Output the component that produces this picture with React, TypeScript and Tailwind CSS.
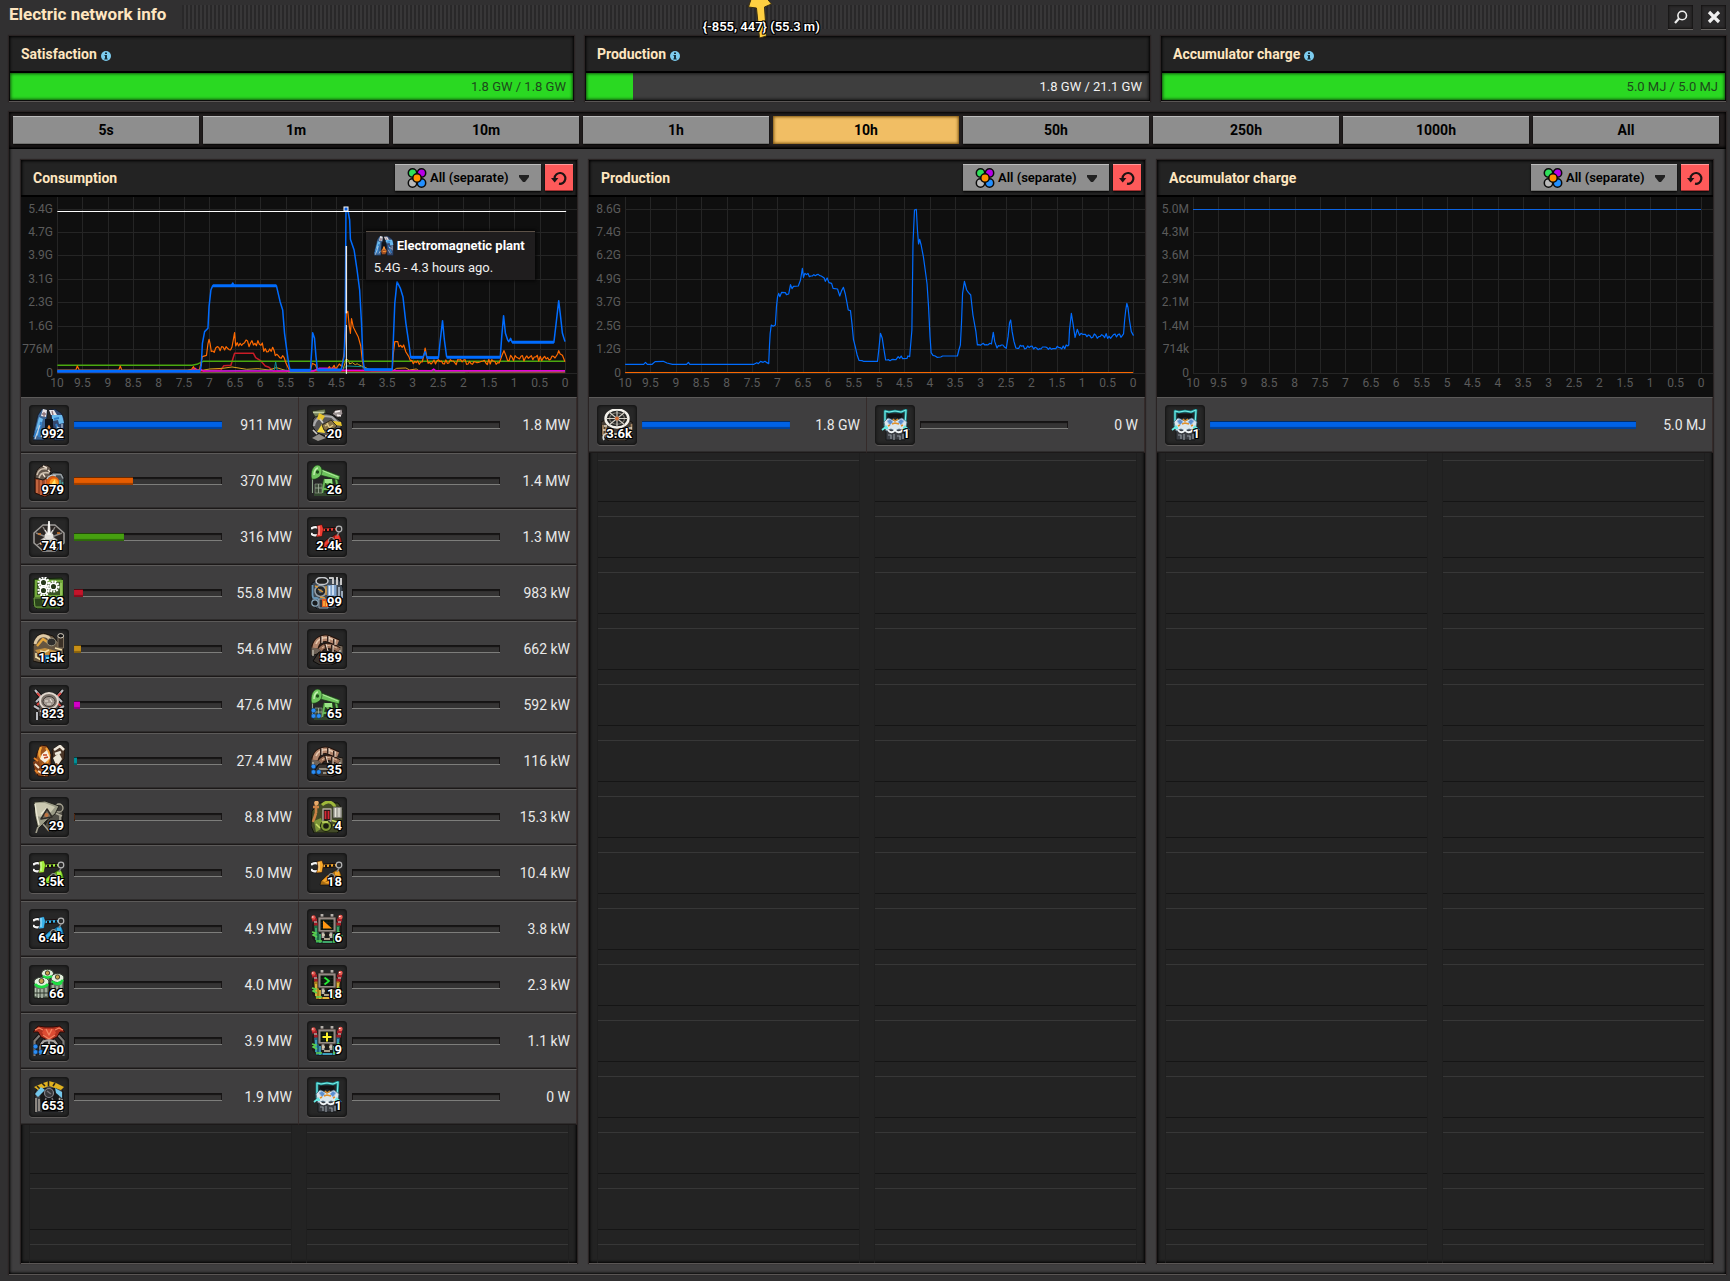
import React from "react";

/* ---------- shared styles ---------- */

const INSET =
  "shadow-[inset_0_0_3px_1px_#000,0_1px_0_#5a5655,0_0_1px_1px_#2a2424]";
const OUTLINE =
  "[text-shadow:1px_0_0_#000,-1px_0_0_#000,0_1px_0_#000,0_-1px_0_#000,1px_1px_0_#000,-1px_1px_0_#000,1px_-1px_0_#000,-1px_-1px_0_#000]";

/* ---------- item sprites, 32 x 32 ---------- */

type Shape = { d: string; f?: string; s?: string; w?: number };
function P({ d, f = "none", s = "none", w = 1 }: Shape) {
  return <path d={d} fill={f} stroke={s} strokeWidth={w} strokeLinejoin="round" />;
}

function Inserter({ c, dark }: { c: string; dark: string }) {
  return (
    <g>
      <P d="M10 24 16 18 19 17 25 13 28 13 30 17 32 25 25 24 19 28 9 28Z" f={dark} s="#0c0c0c" w={0.6} />
      <P d="M11 24 17 19 19 21 14 25ZM24 15l4-1 1 5-5-1ZM22 19l8 2 1 3-8-1ZM13 26l5-2 2 3Z" f={c} />
      <circle cx="20.500" cy="19.500" r="3" fill="#2d2d2d" stroke="#a9a9a9" strokeWidth="1" />
      <P d="M11 9 27 8" s="#1a0d0d" w={4.6} />
      <P d="M11 9 27 8" s={c} w={2.6} />
      <P d="M14 9h2M18 8.700h2M22 8.500h2" s="#101010" w={2.4} />
      <circle cx="28" cy="8" r="2.800" fill="#2b2b2b" stroke="#b5b5b5" strokeWidth="1.200" />
      <P d="M28 11 26 15" s="#888" w={1.6} />
      <P d="M7 6.500C4 5.500 1 6.500 0 8M7 14c-3 1-6 0-7-2" s="#111" w={3.6} />
      <P d="M7 6.500C4 5.500 1 6.500 0 8M7 14c-3 1-6 0-7-2" s="#f4f4f4" w={2.4} />
      <P d="M6 4.500 11 3.500 12.500 8 11 15.500 5.500 16 7 10Z" f={c} s="#250b0b" w={0.6} />
      <P d="M8 5v9" s="#ffffffaa" w={1} />
    </g>
  );
}

function Pumpjack() {
  return (
    <g>
      <P d="M1.500 12V28" s="#8da58a" w={1.100} />
      <P d="M14 14 11 30M20 14 23 30M12 24h14M15 17l9 9M25 14l3 15" s="#24501f" w={3.6} />
      <P d="M14 14 11 29M20 14 23 30M12 24h14M15 17l9 9M25 14l3 15" s="#69b858" w={1.8} />
      <P d="M3 28h27v3H3Z" f="#33482f" />
      <P d="M8 3 29 11 28 15 9 10Z" f="#6cc25c" s="#173c14" w={0.7} />
      <P d="M10 5 27 12" s="#b1e99c" w={1} />
      <P d="M0.500 14C-1 7 2 0 7 0 11 1 12 6 10 10 8 13 4 15 .5 14Z" f="#6fc45e" s="#173c14" w={0.7} />
      <P d="M3 10C3 6 5 3 7 3" s="#c3f0af" w={1.5} />
      <circle cx="6.500" cy="7" r="1.700" fill="#1e4a1b" />
      <P d="M14 14h7v4h-7Z" f="#9be487" />
      <P d="M4 19h7v9H4Z" f="#3b4a37" s="#8a9a85" w={0.7} />
      <P d="M4 23h7M7.500 19v9" s="#a5b3a0" w={0.8} />
    </g>
  );
}

function OffshorePump() {
  return (
    <g>
      <P d="M0 13 8 11 12 19 0 23Z" f="#6d6156" s="#171310" />
      <P d="M22 11 32 13V23L21 20Z" f="#776a5c" s="#171310" />
      <P d="M2 28 8 19H24L30 28 20 32H9Z" f="#3a342f" s="#0d0b0a" />
      <P d="M4 15C5 7 12 4 18 6L27 10" s="#22130c" w={7.5} />
      <P d="M4 15C5 7 12 4 18 6L27 10" s="#b0836a" w={5.5} />
      <P d="M5 11C7 6 12 4 18 5L25 8" s="#e8c9ae" w={1.5} />
      <P d="M9 17C13 11 20 12 28 17" s="#22130c" w={6} />
      <P d="M9 17C13 11 20 12 28 17" s="#996e56" w={4.2} />
      <P d="M11 15C15 11 20 12 26 15" s="#dab699" w={1.1} />
      <P d="M10 3v7M17 3v6M23 6v6M14 11l2 7M21 12v7" s="#33211a" w={2} />
      <P d="M11 3v7M18 3v6M24 6v6M15 11l2 7M22 12v7" s="#ecdccb" w={1} />
      <P d="M2 17v6M29 17v5M8 24h12M12 28h9" s="#b3ada0" w={1.5} />
    </g>
  );
}

function Combinator({ base, light, sign }: { base: string; light: string; sign: React.ReactNode }) {
  return (
    <g>
      <P d="M1 11 7 5H25L31 11V25L26 31H6L1 25Z" f="#1c1a18" />
      <P d="M3 13 8 8V28H24V8L29 13 27 30H5Z" f={base} />
      <P d="M5 15v12M9 21v9M23 21v9M27 14v13M12 29h9" s={light} w={1.8} />
      <P d="M1 19l4 1-3 2 4 2M28 18l-2 3 5 2-4 1M5 28l6 0M22 28l5 0" s="#5ad04e" w={1.7} />
      <P d="M1 7h5M3 11h5M26 7h5M25 11h5" s="#a31c26" w={3} />
      <P d="M3 9h3M27 9h3" s="#e9e4de" w={1.200} />
      <circle cx="2.500" cy="4.500" r="2.200" fill="#e04a43" />
      <circle cx="29.500" cy="4" r="2.200" fill="#ea5a51" />
      <P d="M1 4h1.500M28 3.500h1.500" s="#fff" w={1.2} />
      <P d="M11 1v4M21 1v4M12 19v6M20 19v6" s="#b5b0aa" w={2.8} />
      <P d="M7 4H25V19H7Z" f="#948a84" s="#2b2422" w={0.8} />
      <P d="M9.500 6.500H22.500V17H9.500Z" f="#0b140d" />
      <P d="M10 9.500h12M10 12h12M10 14.500h12M13 7v10M16 7v10M19 7v10" s="#2a332b" w={0.4} />
      {sign}
      <P d="M11 22h3M18 22h3M13 26h6" s="#dccdb0" w={1.5} />
    </g>
  );
}

function Accumulator() {
  return (
    <g>
      <P d="M6 2 10 3 16 2 22 3 27 1 26 17H6Z" f="#20262a" s="#1f8f92" w={2.6} />
      <P d="M6 2 10 3 16 2 22 3 27 1 26 17H6Z" s="#7df5ee" w={1} />
      <P d="M9 5h14l1 6-8-3-8 3Z" f="#121214" />
      <P d="M7 19H26V31H7Z" f="#3b3e44" s="#16181a" />
      <P d="M5 13 9 9 16 12 23 9 28 13 26 22 20 20 16 22 12 20 7 22Z" f="#dbe6ec" s="#4b6a80" w={0.8} />
      <P d="M8 12 11 10 14 13 11 16Z M19 13 22 10 25 12 22 16Z" f="#5c8fd0" s="#9dbce0" w={0.8} />
      <P d="M14 10l2 2 3-2M13 15l3-1 4 1M9 17l2-1M22 17l2-1" s="#e0902a" w={1.5} />
      <P d="M3 21 8 17M25 17 30 21M5 19h4M24 19h4" s="#67e9e3" w={1.8} />
      <P d="M9 21c2 3 5 3 7 0 2 3 5 3 8 0" s="#f4f8fa" w={1.8} />
      <P d="M9 26h3v4M15 25v6M18 27h3v4M24 25v5" s="#8f969d" w={1.2} />
    </g>
  );
}

const SPRITES: Record<string, React.ReactNode> = {
  plant: (
    <g>
      <P d="M5 6 9 0 14 1 14 8 12 20 11 31H0L1 22Z" f="#3c6391" s="#0c1626" w={0.7} />
      <P d="M18 8 16 1 22 0 28 4 31 9 31 31H21L20 18Z" f="#34486f" s="#0c1626" w={0.7} />
      <P d="M6 8 2 24 5 27 10 10ZM19 6h10l2 8-5 1-1-4-6 1Z" f="#69b9ee" />
      <P d="M8 7 10 0 14 1 13 8ZM16 1h5l3 5h-6Z" f="#e9e4e7" />
      <P d="M11 3v5M19 2l1 4M9 5l4 0" s="#8b7178" w={1.3} />
      <P d="M12 10h8v9l-2 3h-6Z" f="#10141c" />
      <P d="M1 28 5 20M8 13 6 28M23 15l5 12M21 10l5-1" s="#2f7cc7" w={2} />
      <P d="M2 30 7 16M24 18l4 2M29 15v8M8 28l2-4M23 22l3 6" s="#c7d3e2" w={1.1} />
      <P d="M11 24 14 20 16 16 18 20 21 24 18 29H13Z" f="#9a4c22" />
      <P d="M14 23 16 17 18 23M14 25h5" s="#ff9838" w={1.6} />
    </g>
  ),
  foundry: (
    <g>
      <P d="M2 12 12 11 17 16V29L12 32 2 28Z" f="#9a4628" s="#210e08" />
      <P d="M4 15v13M8 14v16M12.500 15v15" s="#cf7047" w={1.5} />
      <P d="M2 13C2 5 7 0 14 0l4 3-1 8-7 4Z" f="#63564c" s="#191411" />
      <P d="M4 10C5 5 9 3 14 4M6 13C7 8 11 7 16 8" s="#cdbfae" w={1.6} />
      <P d="M10 1l4 2M15 5l2 2M10 9l2 3" s="#eee0cf" w={1.4} />
      <P d="M15 12 20 7 28 8 31 13 31 23 24 28 17 25Z" f="#464c50" s="#101214" />
      <P d="M20 9.500h8l2 4" s="#98a0a4" w={1.6} />
      <circle cx="20" cy="17.500" r="6.500" fill="#d85a10" />
      <circle cx="21" cy="18" r="4.500" fill="#ff9a1d" />
      <P d="M17 21l5-7 1 6" f="#ffe068" />
      <P d="M14 14c1-3 5-5 9-3" s="#c2c8ca" w={1.3} />
      <P d="M27 15v4M29.500 17v3" s="#3f9e97" w={1.5} />
    </g>
  ),
  roboport: (
    <g>
      <P d="M10 4H22L31 12V22L22 30H10L1 22V12Z" f="#2a2624" s="#a09d9a" w={1.5} />
      <P d="M16 17 3 12M16 17 29 12M16 17 4 24M16 17 28 24M16 17 10 28M16 17 22 28M16 17 10 6M16 17 22 6" s="#8a8682" w={1.4} />
      <P d="M5 13h3M24 12h3M7 23h2M13 25h2M21 26h2" s="#d07a2c" w={1.7} />
      <P d="M7 19 14 14H18L25 19 20 22H12Z" f="#bcbab6" s="#33302d" w={0.5} />
      <ellipse cx="16" cy="15" rx="4.500" ry="3.500" fill="#e4e2dd" />
      <P d="M15.200 0h1.600l1 14h-3.600Z" f="#f7f6f2" />
      <P d="M12 18 7 23M20 18l5 5M14 12l-2-3M18 12l2-3" s="#e8e5df" w={1.2} />
    </g>
  ),
  assembler: (
    <g>
      <P d="M1 2 29 1 31 21 27 32H4L0 28Z" f="#3b5f22" s="#11210a" />
      <P d="M2 3H30V18L28 20H2Z" f="#71a83a" />
      <P d="M4 5H27V18H4Z" f="#3a5424" />
      <P d="M1 21H10V30H2ZM13 22h15v3h-15" f="#2b461b" s="#7aac4d" w={0.9} />
      <P d="M28 6v12M29 22v6" s="#a4cf6a" w={1.3} />
      <g fill="none" stroke="#fff" strokeWidth="2.200" strokeDasharray="1.900 1.100">
        <circle cx="10.500" cy="5.500" r="5" />
        <circle cx="20.500" cy="9.500" r="5" />
        <circle cx="10.500" cy="13.500" r="5" />
      </g>
      <g fill="#26391a" stroke="#fff" strokeWidth="1.500">
        <circle cx="10.500" cy="5.500" r="3.300" />
        <circle cx="20.500" cy="9.500" r="3.300" />
        <circle cx="10.500" cy="13.500" r="3.300" />
      </g>
    </g>
  ),
  drill: (
    <g>
      <P d="M0 13 4 3 10 0 20 3 24 8 30 13 31 25 25 30H8L0 28Z" f="#655541" s="#17120c" />
      <P d="M2 11C4 3 10 1 15 4L20 10" s="#dfcaa6" w={3} />
      <P d="M4 13 10 6 17 11" s="#e3a63e" w={2.4} />
      <ellipse cx="18.500" cy="9" rx="4.500" ry="3.800" fill="#2f2e2d" stroke="#9b9580" />
      <P d="M25 3h5.500v12h-5.500Z" f="#3b3127" s="#8f806a" w={0.8} />
      <ellipse cx="27.700" cy="2.800" rx="2.900" ry="2.200" fill="#121212" stroke="#dcd4c6" />
      <P d="M2 17 12 15 23 18 20 24 7 23Z" f="#c08e3e" />
      <P d="M7 18l5 1 4-2M22 15l7 2M3 24l7 4M3 20v5" s="#f3dfaa" w={1.6} />
      <P d="M11 22h11v8h-11Z" f="#1a6ea8" />
      <P d="M13 25h4M18 27h3" s="#5fd0ff" w={1.8} />
    </g>
  ),
  silo: (
    <g>
      <P d="M4 11 9 6H23L28 11 27 27 16 32 5 27Z" f="#585250" s="#171412" />
      <P d="M2 1 8 8 3 13M30 1 24 8 29 13M1 17 6 20M31 17 26 20M4 31v-8M28 31v-8" s="#12100f" w={4.4} />
      <P d="M2 1 8 8 3 13M30 1 24 8 29 13M1 17 6 20M31 17 26 20M4 31v-8M28 31v-8" s="#b9bbc0" w={2.2} />
      <P d="M4 4l3 3M28 4l-3 3M24 14l4 3M4 16l2-2" s="#d8423c" w={1.8} />
      <ellipse cx="16" cy="12" rx="9" ry="8" fill="#7d736b" stroke="#e0d7cd" strokeWidth="2" />
      <ellipse cx="16" cy="12.500" rx="6" ry="5" fill="#a1978f" stroke="#403a36" />
      <P d="M12 12h3M17 10l2 3M14 15h4" s="#ece5dc" w={1.2} />
      <P d="M7 22 16 25 25 22M12 26v4M20 26v4" s="#c4bcb4" w={1.5} />
    </g>
  ),
  bio: (
    <g>
      <P d="M4 8 8 0 14 1 18 9 18 20 15 32 5 31 1 22Z" f="#9c541c" s="#26100a" />
      <P d="M8 2C5 8 6 13 10 14M13 3c4 4 4 10 1 15" s="#f4a338" w={2.4} />
      <P d="M9 9 14 5 17 13 12 18 7 14Z" f="#f8efdf" />
      <P d="M10 10h4M11 13l4-1" s="#c24420" w={1.6} />
      <P d="M19 5 26 0 32 3 31 14 25 20 20 14Z" f="#4a3527" s="#20140d" />
      <P d="M21 5 27 1 31 5M22 9l6-2" s="#efe8db" w={2.6} />
      <P d="M20 13 26 8 29 14 24 22Z" f="#eee6d6" />
      <P d="M0 17 5 14 8 23 3 30ZM17 21l7-3 3 6-5 7-5-1Z" f="#7f3e1a" />
      <P d="M2 19 6 23M5 26l7 4M14 23l4 5M22 21l4 4" s="#f8e8cf" w={1.9} />
      <P d="M1 13l4 3M9 19l5 3M2 25l3 3" s="#e28028" w={1.9} />
    </g>
  ),
  radar: (
    <g>
      <P d="M14 20 21 8 30 11 29 27 21 31 11 26Z" f="#504e47" s="#141412" />
      <P d="M22 12 29 15M17 24l9 3M27 15v11M19 20l8 3" s="#b0ac9a" w={1.5} />
      <circle cx="26" cy="7" r="4" fill="#3d3c37" stroke="#aaa795" strokeWidth="1.300" />
      <P d="M1 1 12 0 26 5 22 13 13 20 5 28 2 15Z" f="#9b9b87" s="#22221c" />
      <P d="M2 2 12 2 22 6 18 11 9 16 3 15Z" f="#cac8b0" />
      <P d="M2 3 4 15 6 24M8 13l6-6" s="#ebe8d3" w={1.4} />
      <P d="M8 18 14 8 19 16Z" s="#302c27" w={1.5} f="#77705f" />
      <circle cx="13.500" cy="14" r="2" fill="#c07340" />
      <P d="M5 26 3 32M10 23l6 7" s="#a19e8c" w={1.6} />
    </g>
  ),
  centrifuge: (
    <g>
      <P d="M9 4V15H20V4ZM1 13V29H16V13ZM17 9V26H31V9Z" f="#6b7668" s="#141813" />
      <P d="M2.500 19v8M5.500 20v9M9 20v9M13 19v8M20 16v8M24 17v8M28 15v8" s="#b8c4b3" w={1.4} />
      <P d="M1 24h15M17 21h14" s="#2a3328" w={1} />
      <ellipse cx="14.500" cy="4.500" rx="6" ry="4.200" fill="#e2efdc" stroke="#30372e" />
      <ellipse cx="24.500" cy="9" rx="6.500" ry="4.500" fill="#e2efdc" stroke="#30372e" />
      <ellipse cx="8.500" cy="13" rx="7.500" ry="4.800" fill="#e2efdc" stroke="#30372e" />
      <P d="M2 15c3 4 10 4 13 0M19 12c3 4 8 3 11-1M10 7c3 2 6 2 9 0" s="#1ede43" w={2.6} />
      <P d="M21 14c3 2 5 2 8 0" s="#1ede43" w={2} />
      <circle cx="14.500" cy="4" r="2.200" fill="#c7a04a" stroke="#24261f" strokeWidth=".8" />
      <circle cx="24.500" cy="8" r="2.200" fill="#c7a04a" stroke="#24261f" strokeWidth=".8" />
      <circle cx="8.500" cy="12" r="2.500" fill="#c7a04a" stroke="#24261f" strokeWidth=".8" />
    </g>
  ),
  crab: (
    <g>
      <P d="M7 10 1.500 16V31M25 10l5.500 6V31M11 15 7 22v8M21 15l4 7v8" s="#161414" w={4.4} />
      <P d="M7 10 1.500 16V31M25 10l5.500 6V31M11 15 7 22v8M21 15l4 7v8" s="#7d7a77" w={2.2} />
      <P d="M0 7 5 1 12 2H20L27 1 32 7 27 7 24 12 16 16 8 12 5 7Z" f="#b03220" s="#2e0a06" />
      <P d="M11 4h10l2 4-7 6-7-6Z" f="#dd4c33" />
      <P d="M2 5 6 3 10 5M22 5l4-2 4 2M13 4l3 6 3-6M10 10l6 4 6-4" s="#f58461" w={1.3} />
      <P d="M8 19c4-5 12-5 16 0M12 22l4-3 4 3M16 16v9" s="#aaa6a3" w={1.8} />
      <P d="M12 25h8v5h-8Z" f="#4a4644" />
    </g>
  ),
  arch: (
    <g>
      <P d="M2 11 7 4 16 1 26 4 30 11V32H2Z" f="#3f4043" s="#101113" />
      <P d="M9 7h15l2 8-1 16H9L7 16Z" f="#18181a" />
      <P d="M1 6 10 2 16 0 23 2 31 6 28 9 16 5 5 9Z" f="#e0b220" />
      <P d="M9 2l3 3M15.500 0v5M22 2l-2 3M4 5l3 3" s="#29241a" w={1.6} />
      <P d="M2 13 8 6 12 9 5 16ZM22 7l7 4v6l-6-5Z" f="#74c7ec" />
      <P d="M3 17v14M6 18v12M29 18v13M26.500 17v12" s="#aaa39b" w={1.5} />
      <circle cx="16" cy="12" r="4.500" fill="#37373b" stroke="#858389" strokeWidth="1.200" />
      <P d="M13 17l-3 11M19 17l4 11M14 10l4 3M12 22h8" s="#77757b" w={1.5} />
    </g>
  ),
  recycler: (
    <g>
      <P d="M2 10C6 4 14 3 21 6L31 13 29 23 18 28 6 24 1 17Z" f="#555454" s="#131313" />
      <P d="M1 2 14 0 15 4 4 8Z" f="#737f59" s="#1b2013" w={0.7} />
      <P d="M2 3.500h11" s="#c2cda2" w={1.5} />
      <P d="M21 5 24 1 31 0 32 5 27 9Z" f="#9c9393" s="#211d1d" />
      <P d="M24 3l5-1M26 6l4 1" s="#f8f1f1" w={1.6} />
      <P d="M3 17C4 8 12 6 21 8L27 14" s="#a9a8aa" w={2.2} />
      <P d="M8 4 14 7 11 12 6 10ZM22 12l8 1 1 4-7-1Z" f="#e7c52e" />
      <P d="M6 23 11 15 14 24Z" f="#f5da3e" />
      <P d="M11 16 20 11 26 17 20 22 13 21Z" f="#857248" s="#221c10" w={0.8} />
      <P d="M14 17l3-2M18 19l4-3M16 14l2 4" s="#e0c988" w={1.5} />
      <P d="M1 29 8 25 15 29 7 32Z" f="#928f8a" />
      <P d="M2 21l4 4M14 27l5-1M26 21l5 5M24 26l5 4M9 10l3 4" s="#cfccc7" w={1.7} />
    </g>
  ),
  chem: (
    <g>
      <P d="M1 6 10 2H28L32 11V27L24 32H6L0 25Z" f="#3f4954" s="#0f1215" />
      <P d="M1.500 8v10c0 4 4 4 6 3M3 22c2-3 6 0 6 4" s="#6795b7" w={1.8} />
      <ellipse cx="11" cy="4" rx="6" ry="3.600" fill="#222" stroke="#c6c9cd" strokeWidth="1.500" />
      <circle cx="9.500" cy="14" r="5.500" fill="#23272b" stroke="#97a1aa" strokeWidth="1.500" />
      <circle cx="9.500" cy="14" r="2" fill="#5d6770" />
      <P d="M18 1h4v6M26 0v8M30 1v7" s="#c6c6c6" w={2} />
      <P d="M16.500 8h9v11h-9Z" f="#7ca1cb" />
      <P d="M18.500 9v9M22 8v10" s="#dcecfa" w={1.6} />
      <P d="M28 10v10M31 14v7" s="#9caaba" w={2} />
      <P d="M15 9v9M7 12l5 3M14 21l-5-1M4 9l3 1" s="#dc9a36" w={1.4} />
      <circle cx="4" cy="26" r="3.200" fill="#191c1f" stroke="#8eaabd" strokeWidth="1.200" />
      <P d="M8 22h9v9H8Z" f="#353a41" s="#a1abb5" w={0.9} />
      <P d="M11 22h7v8h-7Z" f="#e05c20" />
      <P d="M13 24v5M15.500 24v5" s="#ffc94a" w={1.3} />
    </g>
  ),
  refinery: (
    <g>
      <P d="M1 10 8 2H27L32 9V27L26 32H3L0 25Z" f="#434b28" s="#11140a" />
      <P d="M5 1v11M2 6h6M5 12l-3 9" s="#ca8245" w={2.6} />
      <circle cx="5.500" cy="2" r="2.300" fill="#e8ab6a" />
      <P d="M11 4c4-4 9-4 12 0l2 5" s="#9fb93a" w={3} />
      <P d="M12 8H20V20H12Z" f="#2a1718" s="#b5afa2" w={1.3} />
      <P d="M14.500 10v8M17.500 10v8" s="#d52733" w={1.8} />
      <P d="M22 6h9v11h-9Z" f="#a8a79e" s="#3a3931" w={0.7} />
      <P d="M24.500 7v9M28 7v9" s="#e6e4da" w={1.2} />
      <P d="M3 20 10 17 13 26 5 31Z" f="#7b9537" />
      <circle cx="15" cy="25" r="5.500" fill="#7e9834" stroke="#1a200d" />
      <circle cx="15" cy="25" r="2.800" fill="#191c10" />
      <P d="M21 19.500l7 2M22 24l7 2M5 23l4 4M11 21h6" s="#c8dd66" w={1.6} />
    </g>
  ),
  turbine: (
    <g>
      <P d="M0 13 6 10H26L32 14V27L24 32H8L1 27Z" f="#453d35" s="#14110e" />
      <P d="M2 16v10M5 18v10M9 20v10M23 20v10M27 18v10M30.500 15v10" s="#a48662" w={1.6} />
      <P d="M2 21h7M24 19h7M12 25h9M3 17h3" s="#e3d9c3" w={1.3} />
      <ellipse cx="16" cy="9.500" rx="11.500" ry="9" fill="#262625" stroke="#f4f2ec" strokeWidth="2.400" />
      <ellipse cx="16" cy="9.500" rx="7.500" ry="5.800" fill="none" stroke="#827e75" strokeWidth="1.100" />
      <P d="M16 1v17M5 9.500h22M8 3l16 13M24 3 8 16" s="#d6d2c8" w={1.100} />
      <circle cx="16" cy="9.500" r="2" fill="#d06a35" />
      <P d="M7 25C3 24 1 27 3 31" s="#d7dbd7" w={1.7} />
    </g>
  ),
  pumpjack: <Pumpjack />,
  pump: <OffshorePump />,
  accumulator: <Accumulator />,
  inserterRed: <Inserter c="#f03c31" dark="#a31d17" />,
  inserterGreen: <Inserter c="#a2ee3a" dark="#5a9a1d" />,
  inserterBlue: <Inserter c="#38b4ec" dark="#1872a3" />,
  inserterYellow: <Inserter c="#f5a72a" dark="#a86d14" />,
  selector: (
    <Combinator base="#1f6b41" light="#3fa56b" sign={<P d="M12 7.500V15.500H21Z" f="#ff9712" />} />
  ),
  arithmetic: (
    <Combinator base="#a9801c" light="#e2b53c" sign={<P d="M13.500 8.500 18 12 13.500 15.500" s="#25f036" w={1.800} />} />
  ),
  decider: (
    <Combinator base="#1f647b" light="#3c9dbc" sign={<P d="M16 7.500v9M11.500 12h9" s="#fff22c" w={2} />} />
  ),
};

function Sprite({ name, className }: { name: string; className: string }) {
  return (
    <svg viewBox="0 0 32 32" className={className} aria-hidden="true">
      {SPRITES[name]}
    </svg>
  );
}

/* ---------- rows ---------- */

type Item = { icon: string; count: string; value: string; pct?: number; color?: string; quality?: boolean };

const CONSUMERS: Item[] = [
  { icon: "plant", count: "992", value: "911 MW", pct: 100, color: "#0062e6" },
  { icon: "recycler", count: "20", value: "1.8 MW" },
  { icon: "foundry", count: "979", value: "370 MW", pct: 40, color: "#e65c00" },
  { icon: "pumpjack", count: "26", value: "1.4 MW" },
  { icon: "roboport", count: "741", value: "316 MW", pct: 34, color: "#46a010" },
  { icon: "inserterRed", count: "2.4k", value: "1.3 MW" },
  { icon: "assembler", count: "763", value: "55.8 MW", pct: 6, color: "#c4142a" },
  { icon: "chem", count: "99", value: "983 kW" },
  { icon: "drill", count: "1.5k", value: "54.6 MW", pct: 5, color: "#c99016" },
  { icon: "pump", count: "589", value: "662 kW" },
  { icon: "silo", count: "823", value: "47.6 MW", pct: 4, color: "#d400c8" },
  { icon: "pumpjack", count: "65", value: "592 kW", quality: true },
  { icon: "bio", count: "296", value: "27.4 MW", pct: 2, color: "#00939b" },
  { icon: "pump", count: "35", value: "116 kW", quality: true },
  { icon: "radar", count: "29", value: "8.8 MW", pct: 1, color: "#5a2a10" },
  { icon: "refinery", count: "4", value: "15.3 kW" },
  { icon: "inserterGreen", count: "3.5k", value: "5.0 MW" },
  { icon: "inserterYellow", count: "18", value: "10.4 kW" },
  { icon: "inserterBlue", count: "6.4k", value: "4.9 MW" },
  { icon: "selector", count: "6", value: "3.8 kW" },
  { icon: "centrifuge", count: "66", value: "4.0 MW" },
  { icon: "arithmetic", count: "18", value: "2.3 kW" },
  { icon: "crab", count: "750", value: "3.9 MW", quality: true },
  { icon: "decider", count: "9", value: "1.1 kW" },
  { icon: "arch", count: "653", value: "1.9 MW" },
  { icon: "accumulator", count: "1", value: "0 W" },
];

const PRODUCERS: Item[] = [
  { icon: "turbine", count: "3.6k", value: "1.8 GW", pct: 100, color: "#0062e6" },
  { icon: "accumulator", count: "1", value: "0 W" },
];

const STORAGE: Item[] = [
  { icon: "accumulator", count: "1", value: "5.0 MJ", pct: 100, color: "#0062e6" },
];

function Row({ item }: { item: Item }) {
  const pct = item.pct ?? 0;
  return (
    <li className="flex h-14 items-center border-t border-b border-r border-t-[#5c5a59] border-r-[#352b2a] border-b-[#1c1919] bg-[#3f3e3f] pr-1.5 pl-2 shadow-[inset_0_-1px_0_#2e2c2c]">
      <span className="relative mr-[5px] grid size-10 shrink-0 place-items-center rounded bg-[#272727] shadow-[inset_0_0_3px_1px_#111,0_1px_0_#5e5b5a]">
        <Sprite name={item.icon} className="size-8" />
        {item.quality && (
          <svg viewBox="0 0 10 11" className="absolute bottom-1.5 left-1 h-[11px] w-2.5" aria-hidden="true">
            <g fill="#2a8df5" stroke="#0d3668" strokeWidth=".5">
              <circle cx="2.500" cy="2.500" r="2.300" />
              <circle cx="2.500" cy="8" r="2.300" />
              <circle cx="7.800" cy="8" r="2.300" />
            </g>
          </svg>
        )}
        <span className={`absolute right-[5px] bottom-[3px] text-[13px] leading-4 font-bold text-white ${OUTLINE}`}>
          {item.count}
        </span>
      </span>
      <span
        role="progressbar"
        aria-label={`${item.icon} ${item.value}`}
        aria-valuenow={pct}
        className="h-2 min-w-0 flex-1 border-b border-b-[#7d7d7b] bg-[#353434] shadow-[inset_0_2px_1px_#151313,inset_1px_0_0_#1a1818,inset_-1px_0_0_#1a1818]"
      >
        {pct > 0 && (
          <span
            className="block h-2 shadow-[inset_0_1px_0_#0008,inset_0_-2px_1px_#0005]"
            style={{ width: `${pct}%`, backgroundColor: item.color }}
          />
        )}
      </span>
      <span className="w-[70px] shrink-0 text-right text-sm whitespace-nowrap text-[#e9e9e9]">{item.value}</span>
    </li>
  );
}

/* ---------- charts ---------- */

const GRID_Y = [12, 35, 58, 82, 105, 129, 152, 176];
const X_LABELS = Array.from({ length: 21 }, (_, i) => String(10 - i / 2));

/* Irregular load around a level that drifts from y0 to y1. */
function noise(x0: number, x1: number, y0: number, y1: number, amp: number, seed: number) {
  const out: string[] = [];
  let s = seed;
  for (let x = x0; x <= x1; x += 4) {
    s = (s * 9301 + 49297) % 233280;
    const y = y0 + ((y1 - y0) * (x - x0)) / (x1 - x0) + (s / 233280 - 0.5) * 2 * amp;
    out.push(`${x},${Math.round(y)}`);
  }
  return out.join(" ");
}

function Line({ pts, c, w = 1 }: { pts: string; c: string; w?: number }) {
  return (
    <polyline points={pts} fill="none" stroke={c} strokeWidth={w} strokeLinejoin="round" vectorEffect="non-scaling-stroke" />
  );
}

function Chart({ yLabels, children, label }: { yLabels: string[]; children: React.ReactNode; label: string }) {
  return (
    <svg viewBox="0 0 556 200" className="block h-auto w-full bg-[#0f0f0f]" role="img" aria-label={label}>
      <g stroke="#252525" shapeRendering="crispEdges">
        {GRID_Y.map((y) => (
          <line key={y} x1="36" x2="556" y1={y + 0.5} y2={y + 0.5} />
        ))}
        {X_LABELS.map((t, i) => (
          <line key={t} x1={36.5 + i * 25.4} x2={36.5 + i * 25.4} y1="0" y2="176" />
        ))}
      </g>
      <g fill="#5b5b5b" className="text-xs">
        {yLabels.map((t, i) => (
          <text key={t} x="32" y={GRID_Y[i] + 4} textAnchor="end">{t}</text>
        ))}
        {X_LABELS.map((t, i) => (
          <text key={t} x={36 + i * 25.4} y="190" textAnchor="middle">{t}</text>
        ))}
      </g>
      {children}
    </svg>
  );
}

function ConsumptionChart() {
  return (
    <div className="relative">
      <Chart label="Consumption over 10 hours" yLabels={["5.4G", "4.7G", "3.9G", "3.1G", "2.3G", "1.6G", "776M", "0"]}>
        <g transform="translate(-11 -7) scale(.37 .3333)">
          <Line c="#857848" pts="478,547 540,547 750,547 1240,547 1500,547" />
          <Line c="#5f9a4c" pts="752,547 905,547 1100,547 1230,547" />
          <Line c="#c91c26" w={1.500} pts="128,545 480,545 570,540 578,527 597,526 607,490 658,490 664,503 678,513 690,528 700,532 712,543 1500,545" />
          <Line c="#d9a11c" pts={`515,542 540,537 575,535 600,531 640,538 670,536 700,540 720,533 750,543 900,540 908,508 914,510 918,522 926,518 ${noise(930, 950, 522, 528, 4, 7)} 960,532 975,542 1035,542 1045,535 1070,534 1080,540 1098,537 1105,542 1500,543`} />
          <Line c="#0f8f96" pts="530,541 560,543 640,541 714,541 718,516 722,541 860,541 900,538 910,528 950,530 965,537 990,542 1110,543 1500,543" />
          <Line c="#e800d8" w={1.500} pts="490,542 500,535 508,542 515,537 522,543 820,543 835,535 880,535 890,541 1140,542 1145,537 1150,542 1500,542" />
          <Line c="#4aa80f" w={1.500} pts="128,526 492,526 505,523 522,514 1500,514" />
          <Line
            c="#ff6a00"
            w={1.200}
            pts={`128,540 178,540 182,528 187,540 294,540 298,528 302,540 480,540 491,538 496,530 500,540 512,540 520,500 531,496 535,462 538,448 541,462 544,484 ${noise(548, 603, 480, 470, 10, 11)} 607,428 610,468 ${noise(614, 682, 460, 460, 10, 5)} ${noise(686, 715, 482, 480, 11, 9)} ${noise(717, 742, 488, 505, 10, 19)} 746,520 755,540 812,540 817,520 826,525 831,540 858,540 863,530 868,540 876,526 880,538 890,522 897,530 903,490 907,430 909,370 913,364 917,408 920,430 923,386 928,412 934,425 941,440 948,468 953,518 959,541 1033,541 1036,492 1040,455 1048,455 1051,470 1056,466 1060,472 1064,465 1070,486 1078,500 ${noise(1082, 1116, 514, 518, 7, 3)} 1119,494 1122,474 1126,498 ${noise(1130, 1326, 516, 516, 8, 13)} 1330,495 1335,482 1340,496 ${noise(1345, 1476, 504, 506, 10, 17)} 1480,492 1483,482 1487,492 1493,496 1500,515`}
          />
          <Line
            c="#006cff"
            w={1.500}
            pts="128,544 478,544 514,542 517,525 520,460 526,425 535,415 538,350 543,300 548,287 598,287 602,279 606,287 720,287 730,335 737,360 742,430 748,480 753,520 757,541 812,541 816,470 818,428 823,445 827,500 831,540 895,540 903,500 906,400 908,60 914,66 918,90 920,148 930,180 938,240 945,300 950,400 954,510 958,539 1033,539 1035,480 1040,340 1046,275 1055,295 1062,320 1070,400 1078,460 1083,502 1116,502 1122,485 1127,503 1158,503 1163,450 1169,392 1174,450 1180,500 1325,502 1329,440 1334,377 1339,430 1345,450 1348,455 1353,445 1357,457 1470,457 1476,400 1483,332 1488,380 1493,430 1500,455"
          />
          {["128,544 514,544", "548,287 720,287", "757,541 812,541", "831,540 895,540", "958,539 1033,539", "1083,502 1116,502", "1127,503 1158,503", "1180,502 1325,502", "1357,457 1470,457"].map((p) => (
            <Line key={p} c="#006cff" w={3} pts={p} />
          ))}
          <Line c="#ffffff" pts="128,64.500 1503,64.500" />
          <Line c="#e8e8e8" pts="909,168 909,370" w={1.500} />
          <Line c="#ffffff" pts="909,405 909,552" w={1} />
        </g>
        <rect x="323" y="10" width="4" height="4" fill="#0a5de0" stroke="#fff" />
      </Chart>
      <div
        role="tooltip"
        className="absolute top-[17%] left-[62%] border-t border-t-[#5d5248] bg-[#1f1d1e] pt-1 pr-2.5 pl-2 shadow-[0_0_3px_1px_#050505]"
      >
        <p className="flex items-center gap-[3px] text-[13px] leading-5 font-bold whitespace-nowrap text-white">
          <Sprite name="plant" className="size-5" />
          Electromagnetic plant
        </p>
        <p className="text-[13px] leading-6 text-[#efefef]">5.4G - 4.3 hours ago.</p>
      </div>
    </div>
  );
}

function ProductionChart() {
  return (
    <Chart label="Production over 10 hours" yLabels={["8.6G", "7.4G", "6.2G", "4.9G", "3.7G", "2.5G", "1.2G", "0"]}>
      <g transform="translate(-9 -7) scale(.37 .3333)">
        <Line
          c="#006cff"
          w={1.200}
          pts={`122,523 172,523 177,517 182,523 195,523 203,515 225,514 235,519 250,523 288,523 293,517 297,523 470,523 478,518 482,521 488,514 495,517 500,514 505,518 510,521 512,470 514,430 517,405 522,409 528,405 531,350 534,320 537,310 540,320 545,307 555,308 558,314 564,312 569,284 573,296 577,289 590,288 596,270 601,235 604,262 608,250 ${noise(612, 660, 256, 258, 7, 4)} 663,274 668,264 673,278 680,280 684,295 696,297 702,318 707,302 712,292 717,312 721,335 725,360 731,362 735,400 739,448 744,470 749,495 754,511 762,512 766,514 804,514 808,475 812,430 817,445 821,475 826,510 ${noise(830, 856, 510, 508, 3, 8)} 860,500 864,505 868,498 872,506 884,505 886,498 891,500 894,460 897,420 900,160 904,60 909,58 912,120 915,162 918,148 922,165 928,200 933,240 938,282 942,350 946,440 949,488 954,496 960,498 965,502 975,501 980,498 1020,498 1024,480 1028,465 1031,400 1034,310 1039,274 1045,300 1050,308 1056,315 1062,375 1070,425 1074,465 ${noise(1078, 1104, 464, 465, 5, 6)} 1108,460 1112,462 1117,427 1121,455 1127,474 ${noise(1131, 1148, 470, 468, 6, 2)} 1152,475 1157,440 1161,398 1164,390 1168,425 1173,455 1178,474 ${noise(1182, 1318, 472, 472, 7, 12)} 1321,465 1323,420 1328,370 1333,405 1338,442 1344,418 1350,436 ${noise(1354, 1464, 437, 437, 8, 21)} 1469,432 1472,390 1475,360 1478,340 1481,352 1485,390 1490,425 1496,437`}
        />
        <Line c="#ff6a00" pts="122,547.500 1495,547.500" />
      </g>
    </Chart>
  );
}

function AccumulatorChart() {
  return (
    <Chart label="Accumulator charge over 10 hours" yLabels={["5.0M", "4.3M", "3.6M", "2.9M", "2.1M", "1.4M", "714k", "0"]}>
      <line x1="36" x2="544" y1="12.500" y2="12.500" stroke="#0b62e0" strokeWidth="1" shapeRendering="crispEdges" />
    </Chart>
  );
}

/* ---------- panels ---------- */

const BLANKS =
  "bg-[repeating-linear-gradient(to_bottom,transparent_0_7px,#373737_7px_8px,transparent_8px_48px,#151515_48px_49px,transparent_49px_56px)] shadow-[inset_1px_0_0_#1f1f1f,inset_-1px_0_0_#1f1f1f]";

const RAISED = "shadow-[inset_0_1px_0_#bdbdbd,inset_0_-1px_0_#70706e,0_1px_2px_#000]";

function Panel({ title, items, single, chart }: { title: string; items: Item[]; single?: boolean; chart: React.ReactNode }) {
  const id = `surface-${title.replace(" ", "-")}`;
  return (
    <section className={`flex min-w-0 flex-1 flex-col bg-[#232323] ${INSET}`}>
      <header className="flex h-[37px] items-center border-b-2 border-black pr-1 pl-3">
        <h2 id={id} className="flex-1 text-sm font-bold text-[#ffe6c0]">{title}</h2>
        <div className="relative mr-1 text-black">
          <select
            aria-labelledby={id}
            className={`block h-[27px] w-[146px] appearance-none bg-[#8e8e8e] pr-6 pl-[35px] text-[13px] leading-[27px] font-semibold ${RAISED}`}
          >
            <option>All (separate)</option>
          </select>
          <svg viewBox="0 0 20 20" className="pointer-events-none absolute top-1 left-3 size-5" aria-hidden="true">
            <g stroke="#0b0b0b" strokeWidth="1.500">
              <circle cx="5.500" cy="5" r="4.200" fill="#2fe05a" />
              <circle cx="14.500" cy="5" r="4.200" fill="#b800e8" />
              <circle cx="5.500" cy="15" r="4.200" fill="#b9b9b9" />
              <circle cx="14.500" cy="15" r="4.200" fill="#2390ff" />
              <circle cx="10" cy="10" r="4.200" fill="#ff9100" />
            </g>
          </svg>
          <svg viewBox="0 0 10 7" className="pointer-events-none absolute top-[11px] right-3 h-[7px] w-2.5" aria-hidden="true">
            <path d="M0 0H10V2L6 7H4L0 2Z" fill="#222" />
          </svg>
        </div>
        <button
          type="button"
          aria-label="Reset"
          className="grid h-[27px] w-7 place-items-center bg-[#fe5a5a] shadow-[inset_0_1px_0_#ff9a9a,inset_0_-1px_0_#a33030,0_1px_2px_#000]"
        >
          <svg viewBox="0 0 16 16" className="size-4" aria-hidden="true">
            <path d="M8 13.700A5.400 5.400 0 1 0 3.600 8V9" fill="none" stroke="#1c1414" strokeWidth="2.200" />
            <path d="M0 8H7.400L3.700 12.500Z" fill="#1c1414" />
          </svg>
        </button>
      </header>
      {chart}
      <ul className={single ? "grid grid-cols-1" : "grid grid-cols-2"}>
        {items.map((item) => (
          <Row key={item.icon + item.count} item={item} />
        ))}
      </ul>
      <div className="grid min-h-14 flex-1 grid-cols-2 gap-[14px] px-2" aria-hidden="true">
        <div className={BLANKS} />
        <div className={BLANKS} />
      </div>
    </section>
  );
}

function Gauge({ title, pct, text, dark }: { title: string; pct: number; text: string; dark?: boolean }) {
  return (
    <section className={`min-w-0 flex-1 bg-[#232323] p-px ${INSET}`}>
      <h2 className="flex h-9 items-center gap-1 border-b-2 border-black px-[11px] text-sm font-bold text-[#ffe6c0]">
        {title}
        <svg viewBox="0 0 10 10" className="mt-1 size-2.5" aria-hidden="true">
          <circle cx="5" cy="5" r="5" fill="#7dcdf0" />
          <path d="M4 1.500h2v1.500H4ZM3.500 4H6v3.500h.7v1H3.300v-1H4V5h-.5Z" fill="#16303c" />
        </svg>
      </h2>
      <div
        role="progressbar"
        aria-label={title}
        aria-valuenow={pct}
        className="relative h-[27px] bg-[#3e3e3e]"
      >
        <div className="h-full bg-[#2ad922]" style={{ width: `${pct}%` }} />
        <span
          className={`absolute inset-0 pr-[7px] text-right text-[13px] leading-7 shadow-[inset_0_0_3px_1px_#0009] ${dark ? "text-[#1d4a1b]" : "text-[#f2f2f2]"}`}
        >
          {text}
        </span>
      </div>
    </section>
  );
}

const RANGES = ["5s", "1m", "10m", "1h", "10h", "50h", "250h", "1000h", "All"];
const FRAME_BTN =
  "grid h-6 w-[25px] place-items-center bg-[#2b2a2b] text-white shadow-[inset_0_0_2px_1px_#141212,0_1px_0_#676462]";

export default function App() {
  const [range, setRange] = React.useState("10h");
  return (
    <main className="relative flex min-h-screen flex-col bg-[#313031] pr-1 pb-[7px] pl-[9px] font-[Roboto,'Liberation_Sans',sans-serif]">
      <header className="flex h-[33px] items-center">
        <h1 className="self-start text-[17px] leading-7 font-bold whitespace-nowrap text-[#ffe6c0]">Electric network info</h1>
        <div className="mr-3 ml-4 h-6 flex-1 bg-[repeating-linear-gradient(to_right,#292829_0_2px,#383738_2px_4px)]" />
        <button type="button" aria-label="Search" className={`mr-2 ${FRAME_BTN}`}>
          <svg viewBox="0 0 14 14" className="size-3.5" aria-hidden="true">
            <circle cx="8.200" cy="5.500" r="4.300" fill="none" stroke="#eee" strokeWidth="1.600" />
            <path d="M5 8.500 1 13" stroke="#eee" strokeWidth="2.200" />
          </svg>
        </button>
        <button type="button" aria-label="Close" className={FRAME_BTN}>
          <svg viewBox="0 0 14 14" className="size-3.5" aria-hidden="true">
            <path d="M2 2 12 12M12 2 2 12" stroke="#eee" strokeWidth="3.200" />
          </svg>
        </button>
      </header>

      <div className="mt-[3px] flex gap-[11px]">
        <Gauge title="Satisfaction" pct={100} text="1.8 GW / 1.8 GW" dark />
        <Gauge title="Production" pct={8.3} text="1.8 GW / 21.1 GW" />
        <Gauge title="Accumulator charge" pct={100} text="5.0 MJ / 5.0 MJ" dark />
      </div>

      <div className={`mt-[11px] flex flex-1 flex-col bg-[#3f3e3f] ${INSET}`}>
        <nav className="flex gap-1 border-b border-black bg-[#242020] pt-1 pr-[7px] pb-1 pl-1 shadow-[inset_0_0_3px_1px_#000]">
          {RANGES.map((r) => (
            <button
              key={r}
              type="button"
              aria-pressed={r === range}
              onClick={() => setRange(r)}
              className={`h-7 flex-1 text-sm font-bold text-black ${
                r === range ? "bg-[#f1be64] shadow-[inset_0_0_3px_1px_#7a5210]" : `bg-[#8e8e8e] ${RAISED}`
              }`}
            >
              {r}
            </button>
          ))}
        </nav>
        <div className="flex flex-1 gap-3 pt-[11px] pr-[13px] pb-[11px] pl-3">
          <Panel title="Consumption" items={CONSUMERS} chart={<ConsumptionChart />} />
          <Panel title="Production" items={PRODUCERS} chart={<ProductionChart />} />
          <Panel title="Accumulator charge" items={STORAGE} single chart={<AccumulatorChart />} />
        </div>
      </div>

      <div className="pointer-events-none absolute top-0 left-[44%] -translate-x-1/2">
        <svg viewBox="0 0 28 38" className="mx-auto h-[38px] w-7" aria-hidden="true">
          <path d="M4 -2H19L24 4 17 7 19 36 12 38 9 8 1 7Z" fill="#ffd042" stroke="#3b2f10" strokeWidth="1" />
        </svg>
        <p className={`-mt-[19px] text-[13px] leading-4 font-semibold whitespace-nowrap text-white ${OUTLINE}`}>
          {"{-855, 447} (55.3 m)"}
        </p>
      </div>
    </main>
  );
}
